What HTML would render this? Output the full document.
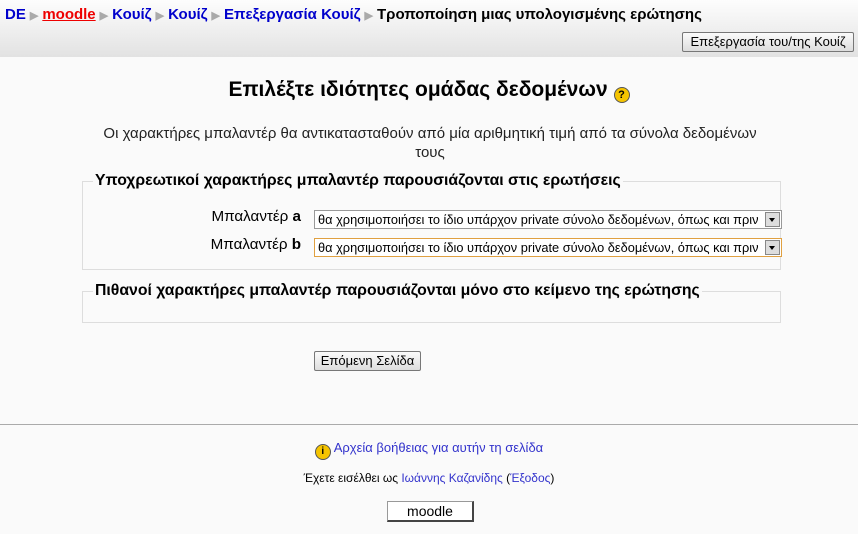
<!DOCTYPE html>
<html><head><meta charset="utf-8"><style>
body{margin:0;width:858px;height:534px;background:#fafafa;font-family:"Liberation Sans",Arial,sans-serif;font-size:13px;color:#000;position:relative;overflow:hidden}
.hdr{position:absolute;left:0;top:0;width:858px;height:57px;background:linear-gradient(#fdfdfd,#e2e2e2)}
.bc{position:absolute;left:5px;top:6px;font-size:15px;font-weight:bold;white-space:nowrap}
.bc a{color:#00c;text-decoration:none}
.bc .m{color:#e00;text-decoration:underline}
.bc .s{color:#aaa;font-size:11px;margin:0 4px}
.btn{position:absolute;background:linear-gradient(#fbfbfb,#ddd);border:1px solid #777;border-radius:2px;font-size:13px;text-align:center;line-height:18px;white-space:nowrap}
h2{position:absolute;left:0;width:858px;top:78px;margin:0;text-align:center;font-size:21px}
.q{display:inline-block;width:14px;height:14px;border-radius:50%;background:#f5c400;border:1px solid #555;font-size:11px;line-height:14px;vertical-align:-2px;text-align:center}
.intro{position:absolute;left:90px;width:680px;top:124px;text-align:center;font-size:15px;line-height:19px;color:#222}
.fs{position:absolute;left:82px;width:697px;border:1px solid #ddd}
.lg{position:absolute;left:10px;top:-10px;background:#fafafa;padding:0 2px;font-weight:bold;font-size:15.8px;white-space:nowrap}
.lab{position:absolute;right:479px;font-size:15.2px;white-space:nowrap}
.sel{position:absolute;left:231px;height:19px;border:1px solid #999;background:#fff;font-size:12.8px;line-height:18px;padding-left:3px;box-sizing:border-box;width:468px;white-space:nowrap;overflow:hidden}
.sel i{position:absolute;right:1px;top:1px;width:15px;height:15px;background:#ddd;border:1px solid #888;box-sizing:border-box}
.sel i:after{content:"";position:absolute;left:3px;top:5px;border:3px solid transparent;border-top:4px solid #000}
.hr{position:absolute;left:0;top:424px;width:858px;border-top:1px solid #aaa}
.c{position:absolute;left:0;width:858px;text-align:center}
.c a{color:#33c;text-decoration:none}
</style></head><body>
<div class="hdr"></div>
<div class="bc"><a href="#">DE</a><span class="s">▶</span><a class="m" href="#">moodle</a><span class="s">▶</span><a href="#">Κουίζ</a><span class="s">▶</span><a href="#">Κουίζ</a><span class="s">▶</span><a href="#">Επεξεργασία Κουίζ</a><span class="s">▶</span>Τροποποίηση μιας υπολογισμένης ερώτησης</div>
<div class="btn" style="left:682px;top:32px;width:170px;height:18px">Επεξεργασία του/της Κουίζ</div>
<h2>Επιλέξτε ιδιότητες ομάδας δεδομένων <span class="q">?</span></h2>
<div class="intro">Οι χαρακτήρες μπαλαντέρ θα αντικατασταθούν από μία αριθμητική τιμή από τα σύνολα δεδομένων τους</div>
<div class="fs" style="top:181px;height:87px">
<div class="lg">Υποχρεωτικοί χαρακτήρες μπαλαντέρ παρουσιάζονται στις ερωτήσεις</div>
<div class="lab" style="top:26px">Μπαλαντέρ <b>a</b></div>
<div class="sel" style="top:28px">θα χρησιμοποιήσει το ίδιο υπάρχον private σύνολο δεδομένων, όπως και πριν<i></i></div>
<div class="lab" style="top:54px">Μπαλαντέρ <b>b</b></div>
<div class="sel" style="top:56px;border-color:#e0a040">θα χρησιμοποιήσει το ίδιο υπάρχον private σύνολο δεδομένων, όπως και πριν<i></i></div>
</div>
<div class="fs" style="top:291px;height:30px">
<div class="lg">Πιθανοί χαρακτήρες μπαλαντέρ παρουσιάζονται μόνο στο κείμενο της ερώτησης</div>
</div>
<div class="btn" style="left:314px;top:351px;width:105px;height:18px">Επόμενη Σελίδα</div>
<div class="hr"></div>
<div class="c" style="top:440px;font-size:13px"><span class="q" style="font-size:10px;font-weight:bold">i</span> <a href="#">Αρχεία βοήθειας για αυτήν τη σελίδα</a></div>
<div class="c" style="top:471px;font-size:12px">Έχετε εισέλθει ως <a href="#">Ιωάννης Καζανίδης</a> (<a href="#">Έξοδος</a>)</div>
<div style="position:absolute;left:387px;top:501px;width:84px;height:18px;background:#fff;border:1px solid #999;border-right:2px solid #444;border-bottom:2px solid #444;text-align:center;font-size:14px;line-height:18px">moodle</div>
</body></html>
